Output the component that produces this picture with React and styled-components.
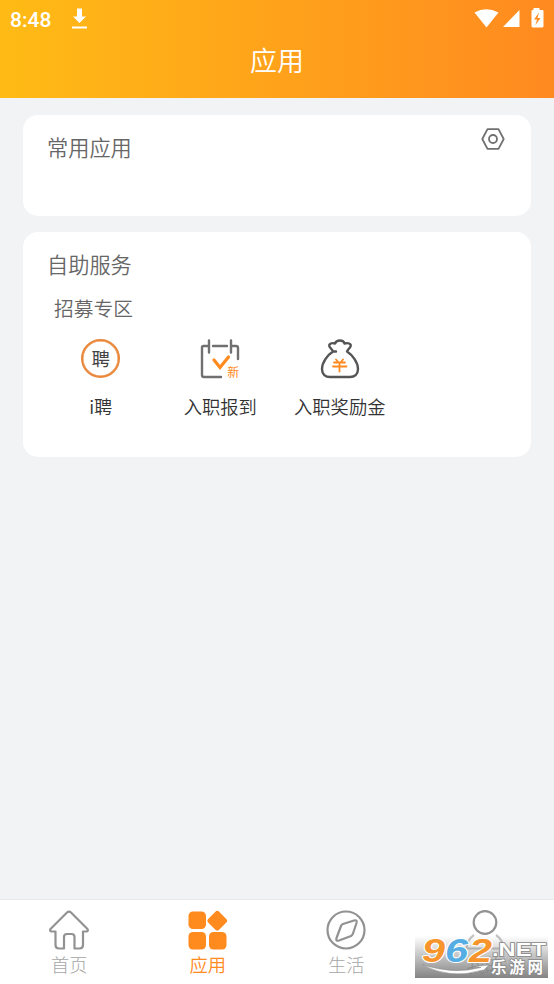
import React from 'react';
import styled, { createGlobalStyle } from 'styled-components';

const ORANGE = '#ff8a1e';
const GREY = '#666666';
const CJK = "'Noto Sans CJK SC', sans-serif";

const GlobalStyle = createGlobalStyle`
  * {
    box-sizing: border-box;
  }
  body {
    margin: 0;
    background: #f2f3f5;
    font-family: ${CJK};
  }
`;

const Screen = styled.div`
  display: flex;
  flex-direction: column;
  width: 554px;
  height: 984px;
  overflow: hidden;
  background: #f2f3f5;
`;

const Header = styled.header`
  height: 98px;
  flex: none;
  color: white;
  background: linear-gradient(90deg, #ffbb15 0%, #ff8a20 100%);
`;

const StatusBar = styled.div`
  display: flex;
  align-items: center;
  height: 38px;
  padding: 0 9px 0 10px;
`;

const Clock = styled.span`
  width: 61px;
  padding-top: 2px;
  font: 500 21px/38px Roboto, sans-serif;
`;

const StatusIcons = styled.div`
  display: flex;
  margin-left: auto;
`;

const Title = styled.h1`
  margin: 0;
  font-size: 27px;
  font-weight: 350;
  line-height: 44px;
  text-align: center;
`;

const Content = styled.main`
  flex: 1;
  display: flex;
  flex-direction: column;
  gap: 16px;
  padding: 17px 23px 0;
`;

const Card = styled.section`
  height: ${props => props.$height}px;
  border-radius: 15px;
  background: white;
`;

const CardHeader = styled.div`
  display: flex;
  justify-content: space-between;
  padding: 12px 26px 0 24px;
`;

const CardTitle = styled.h2`
  margin: 0;
  color: ${GREY};
  font-size: 21.2px;
  font-weight: 350;
  line-height: 40px;
`;

const GroupTitle = styled.h3`
  margin: 6px 0 0 31px;
  color: ${GREY};
  font-size: 19.8px;
  font-weight: 350;
  line-height: 36px;
`;

const AppGrid = styled.div`
  display: grid;
  grid-template-columns: repeat(4, 119.5px);
  padding: 13px 0 0 18px;
`;

const AppItem = styled.div`
  display: flex;
  flex-direction: column;
  align-items: center;
`;

const AppLabel = styled.span`
  margin-top: 12px;
  color: #333;
  font-size: 18.3px;
  font-weight: 350;
  line-height: 30px;
  white-space: nowrap;
`;

const RoundIcon = styled.div`
  width: 39px;
  height: 39px;
  margin-bottom: 1px;
  border: 2px solid #e9873a;
  border-radius: 50%;
  box-shadow: inset 0 0 0 0.5px #e9873a;
  color: #444;
  font-size: 18.5px;
  line-height: 34px;
  text-align: center;
`;

const CalendarIcon = styled.div`
  position: relative;
  height: 40px;
`;

const NewMark = styled.span`
  position: absolute;
  left: 27px;
  top: 26px;
  color: ${ORANGE};
  font-size: 12px;
  line-height: 14px;
`;

const TabBar = styled.nav`
  position: relative;
  display: grid;
  grid-template-columns: repeat(4, 1fr);
  flex: none;
  height: 85px;
  border-top: 1px solid #e8e9ea;
  background: white;
`;

const Tab = styled.div`
  display: flex;
  flex-direction: column;
  align-items: center;
  padding-top: 10px;
  color: ${props => (props.$active ? ORANGE : '#a6a6a6')};
  font-size: 18.3px;
  font-weight: ${props => (props.$active ? 350 : 300)};
  line-height: 28px;
`;

const Watermark = styled.div`
  position: absolute;
  left: 415px;
  top: 36px;
  width: 133px;
  height: 42px;
  background: linear-gradient(180deg, rgba(125, 125, 125, 0) 0%, rgba(125, 125, 125, 0.95) 100%);

  svg {
    display: block;
    overflow: visible;
  }
`;

const DownloadIcon = () => (
  <svg width="17" height="22" viewBox="0 0 17 22" fill="white">
    <path d="M6 .5h5v8h4l-6.500 6.500L2 8.500h4zM1 18.500h15v2H1z" />
  </svg>
);

const SignalIcons = () => (
  <svg width="72" height="22" viewBox="0 0 72 22" fill="white">
    <path d="M1.500 4.500Q13-2 25.500 4.500L13.500 19.500z" />
    <path d="M46.500 2v17H30z" />
    <path d="M61 0h6v2h3q1 0 1 1v15q0 1.500-1.500 1.500h-9q-1.500 0-1.500-1.500V3q0-1 1-1h1z" transform="translate(-.5 0)" />
    <path d="M66 4.500L61 11.500h3L62.500 17l5-7h-3z" fill={ORANGE} />
  </svg>
);

const SettingsIcon = () => (
  <svg width="24" height="24" viewBox="0 0 24 24" fill="none" stroke="#707070" strokeWidth="1.8">
    <path d="M6.500 2.200h11L22.700 12l-5.200 9.800h-11L1.300 12z" strokeLinejoin="round" />
    <circle cx="12" cy="12" r="4" />
  </svg>
);

const Calendar = () => (
  <CalendarIcon>
    <svg width="40" height="40" viewBox="0 0 40 40" fill="none" strokeWidth="2.400" strokeLinecap="round">
      <path d="M8 7H3.500Q2 7 2 8.500V36q0 2 2 2h17M13 7h14M32 7h4q2 0 2 2v11M9 1.500v12M31 1.500v12" stroke="#707070" />
      <path d="M14 21l6 7.500L28.500 18" stroke={ORANGE} strokeWidth="3.200" />
    </svg>
    <NewMark>新</NewMark>
  </CalendarIcon>
);

const MoneyBagIcon = () => (
  <svg width="40" height="40" viewBox="0 0 40 40" fill="none" strokeWidth="2.400" strokeLinecap="round" strokeLinejoin="round">
    <path d="M13 12.500C11.500 9.500 8 7.500 9.500 5.500c1.500-2 3.500-1.500 5.500-1C16 2 18 1.500 20 1.500s4 1 4.500 3c2-.5 4.500-1 6 1s-2 4-3.500 7c5.500 3.500 11 11 11 17.500 0 5.500-3.500 8-8 8H10c-4.500 0-8-2.500-8-8 0-6.500 5.500-14 11-17.500zM13 12.500h3" stroke="#555" />
    <path d="M16 20.500l2.500 3M23 20.500l-2.500 3M14 23.500h11M13 27.500h13.500M19.500 24v8.500" stroke={ORANGE} strokeWidth="1.800" />
  </svg>
);

const HomeIcon = () => (
  <svg width="40" height="40" viewBox="0 0 40 40" fill="none" stroke="#929292" strokeWidth="2.200" strokeLinejoin="round">
    <path d="M1.500 19L18 2.500q2-2 4 0L38.500 19q1 2.500-1 2.500H34V35q0 3.500-3.500 3.500h-5V27q0-3-3-3h-4.500q-3 0-3 3v11.500H10Q6.500 38.500 6.500 35V21.500H2.500q-2 0-1-2.500z" />
  </svg>
);

const AppsIcon = () => (
  <svg width="40" height="40" viewBox="0 0 40 40" fill={ORANGE}>
    <rect x=".5" y="1.500" width="17.500" height="17.500" rx="4.500" />
    <rect x=".5" y="22" width="17.500" height="17.500" rx="4.500" />
    <rect x="21" y="22" width="17.500" height="17.500" rx="4.500" />
    <rect x="21.500" y="3" width="15.500" height="15.500" rx="3" transform="rotate(45 29.250 10.750)" />
  </svg>
);

const CompassIcon = () => (
  <svg width="40" height="40" viewBox="0 0 40 40" fill="none" stroke="#929292" strokeWidth="2.200">
    <circle cx="20" cy="20" r="18.500" />
    <path d="M17 14l11-3.500q3.500-1 2.500 2.500L27 23.500q-.5 1.500-2 2.500l-12 4.500q-3.500 1-2.500-2.500L15 16q.5-1.500 2-2z" strokeLinejoin="round" />
  </svg>
);

const ProfileIcon = () => (
  <svg width="40" height="40" viewBox="0 0 40 40" fill="none" stroke="#929292" strokeWidth="2.200">
    <circle cx="20" cy="12.500" r="11.300" />
    <path d="M9 25Q2 30 1.500 38.500h37Q38 30 31 25" stroke="#c4c4c4" />
  </svg>
);

const Digit = styled.text`
  font: italic 700 33px 'Liberation Sans', sans-serif;
  fill: ${props => props.$color};
  stroke: white;
  stroke-width: 2px;
  stroke-linejoin: round;
  paint-order: stroke;
`;

const SiteLogo = () => (
  <svg width="133" height="42" viewBox="0 0 133 42">
    <path d="M7 28.500Q35 44 68 34l-3 3.500L74 29l-14 1.500 6 1Q38 39 7 28.500z" fill="white" stroke="#888" strokeWidth=".5" />
    <Digit $color="#f7942b" x="7" y="26" textLength="23" lengthAdjust="spacingAndGlyphs">9</Digit>
    <Digit $color="#55ade3" x="30" y="26" textLength="23" lengthAdjust="spacingAndGlyphs">6</Digit>
    <Digit $color="#f7942b" x="54" y="26" textLength="23" lengthAdjust="spacingAndGlyphs">2</Digit>
    <g fill="white" stroke="#888" strokeWidth="1.500" paintOrder="stroke" fontWeight="700">
      <text x="77" y="20" fontFamily="Liberation Sans, sans-serif" fontSize="18" textLength="54" lengthAdjust="spacingAndGlyphs">.NET</text>
      <text x="76" y="37" fontFamily="Noto Sans CJK SC, sans-serif" fontSize="15.500" textLength="52">乐游网</text>
    </g>
  </svg>
);

class App extends React.Component {
  render() {
    return (
      <Screen>
        <GlobalStyle />
        <Header>
          <StatusBar>
            <Clock>8:48</Clock>
            <DownloadIcon />
            <StatusIcons><SignalIcons /></StatusIcons>
          </StatusBar>
          <Title>应用</Title>
        </Header>
        <Content>
          <Card $height={101}>
            <CardHeader>
              <CardTitle>常用应用</CardTitle>
              <SettingsIcon />
            </CardHeader>
          </Card>
          <Card $height={225}>
            <CardHeader>
              <CardTitle>自助服务</CardTitle>
            </CardHeader>
            <GroupTitle>招募专区</GroupTitle>
            <AppGrid>
              <AppItem>
                <RoundIcon>聘</RoundIcon>
                <AppLabel>i聘</AppLabel>
              </AppItem>
              <AppItem>
                <Calendar />
                <AppLabel>入职报到</AppLabel>
              </AppItem>
              <AppItem>
                <MoneyBagIcon />
                <AppLabel>入职奖励金</AppLabel>
              </AppItem>
            </AppGrid>
          </Card>
        </Content>
        <TabBar>
          <Tab><HomeIcon />首页</Tab>
          <Tab $active><AppsIcon />应用</Tab>
          <Tab><CompassIcon />生活</Tab>
          <Tab><ProfileIcon />我的</Tab>
          <Watermark><SiteLogo /></Watermark>
        </TabBar>
      </Screen>
    );
  }
}

export default App;
